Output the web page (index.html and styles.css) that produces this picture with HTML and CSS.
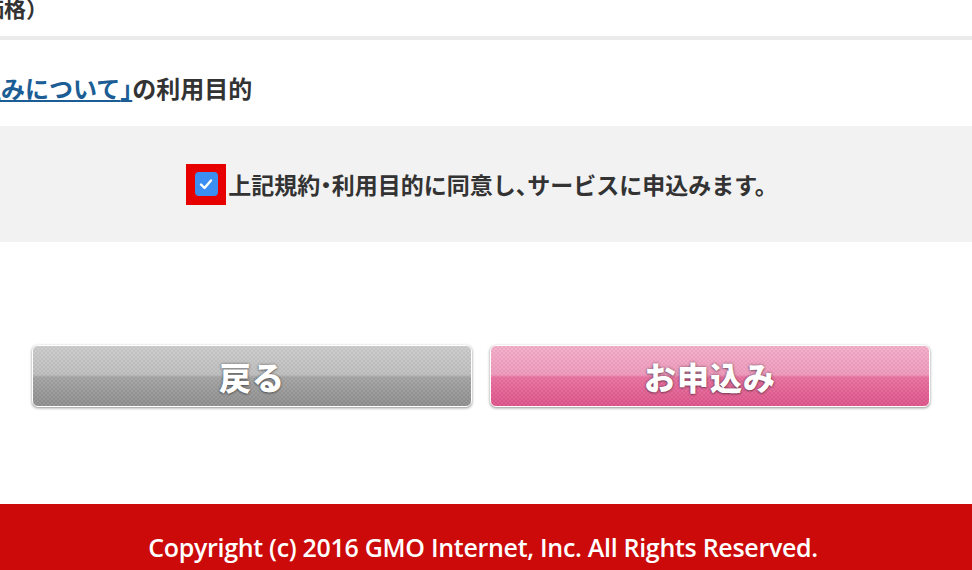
FILE: index.html
```html
<!DOCTYPE html>
<html lang="ja">
<head>
    <meta charset="utf-8">
    <title>お申込み内容の確認</title>
    <link rel="stylesheet" href="styles.css">
</head>
<body>
    <div class="top-note">（月額料金は税込価格）</div>
    <hr class="rule">

    <p class="purpose"><a href="#">「お申込みの仕組みについて<span class="half">」</span></a>の利用目的</p>

    <div class="agree-box">
        <label class="agree">
            <span class="check-frame">
                <input type="checkbox" id="agree" checked>
                <span class="check-mark">
                    <svg viewBox="0 0 22 22" width="22" height="22">
                        <path d="M6 11.5 L9.5 15 L16 7.5" fill="none" stroke="#fff" stroke-width="2.4" stroke-linecap="round" stroke-linejoin="round"/>
                    </svg>
                </span>
            </span>
            上記規約<span class="half">・</span>利用目的に同意し<span class="half">、</span>サービスに申込みます。
        </label>
    </div>

    <div class="buttons">
        <button type="button" class="btn btn-back">戻る</button>
        <button type="submit" class="btn btn-apply">お申込み</button>
    </div>

    <footer class="footer">
        Copyright (c) 2016 GMO Internet, Inc. All Rights Reserved.
    </footer>
</body>
</html>
```

FILE: styles.css
```css
body {
    margin: 0;
    background-color: #fff;
    color: #333;
    font-family: "Noto Sans CJK JP", "Noto Sans", sans-serif;
    overflow: hidden;
}
.half {
    font-feature-settings: "halt";
}
.top-note {
    margin: -8px 0 0 -194px;
    height: 44px;
    font-size: 22px;
    font-weight: bold;
    line-height: 30px;
    white-space: nowrap;
}
.rule {
    margin: 0;
    height: 4px;
    border: none;
    background-color: #ebebeb;
}
.purpose {
    margin: 33px 0 0 -191px;
    height: 53px;
    font-size: 24px;
    font-weight: bold;
    line-height: 30px;
    white-space: nowrap;
}
.purpose a {
    color: #1b5d94;
    text-decoration: underline;
    text-decoration-thickness: 2px;
    text-underline-offset: 2px;
}
.agree-box {
    height: 116px;
    background-color: #f2f2f2;
    display: flex;
    align-items: center;
    justify-content: center;
    padding-right: 8px;
}
.agree {
    display: flex;
    align-items: center;
    font-size: 23px;
    font-weight: bold;
    cursor: pointer;
}
.check-frame {
    width: 40px;
    height: 41px;
    background-color: #e60000;
    display: flex;
    align-items: center;
    justify-content: center;
    margin-right: 2px;
}
.check-frame input {
    display: none;
}
.check-mark {
    width: 23px;
    height: 24px;
    border-radius: 4px;
    background-color: #3b8ef2;
    display: flex;
    align-items: center;
    justify-content: center;
}
.buttons {
    display: flex;
    gap: 18px;
    padding: 0 42px 0 32px;
    margin-top: 103px;
}
.btn {
    flex: 1;
    height: 62px;
    border: 1px solid #fff;
    border-radius: 6px;
    box-shadow: 0 1px 3px rgba(0, 0, 0, 0.45);
    color: #fff;
    font-family: "Noto Sans CJK JP", sans-serif;
    font-size: 32px;
    font-weight: 900;
    letter-spacing: 1px;
    text-shadow: 0 0 3px rgba(0, 0, 0, 0.45), 0 1px 2px rgba(0, 0, 0, 0.3);
    cursor: pointer;
}
.btn-back {
    background-color: #aaa;
    background-image:
        repeating-conic-gradient(rgba(255, 255, 255, 0.06) 0 25%, rgba(0, 0, 0, 0.03) 0 50%),
        linear-gradient(#cbcbcb, #bdbdbd 48%, #a3a3a3 52%, #8e8e8e);
    background-size: 4px 4px, 100% 100%;
}
.btn-apply {
    background-color: #e97aa5;
    background-image:
        repeating-conic-gradient(rgba(255, 255, 255, 0.06) 0 25%, rgba(0, 0, 0, 0.03) 0 50%),
        linear-gradient(#f3adc8, #ee98bb 48%, #e8709f 52%, #dd548a);
    background-size: 4px 4px, 100% 100%;
}
.footer {
    margin-top: 97px;
    height: 90px;
    background-color: #cc0a0a;
    color: #fff;
    text-align: center;
    font-family: "Open Sans", sans-serif;
    font-size: 25px;
    font-weight: 600;
    line-height: 30px;
    padding: 28px 6px 0 0;
    box-sizing: border-box;
    letter-spacing: -0.3px;
}
```
